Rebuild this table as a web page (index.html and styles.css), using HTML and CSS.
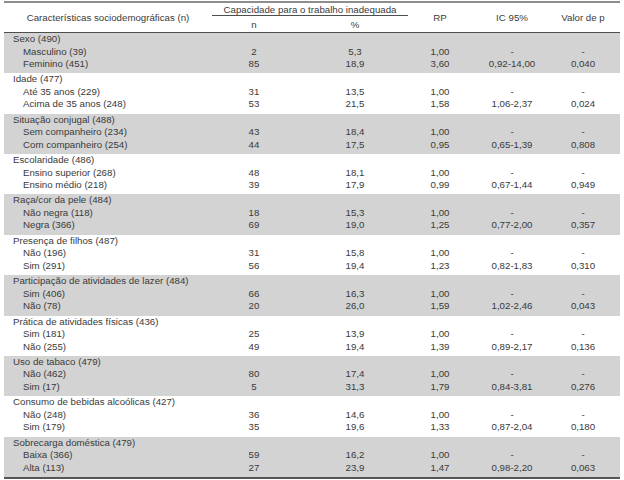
FILE: index.html
```html
<!DOCTYPE html>
<html lang="pt">
<head>
<meta charset="utf-8">
<title>Tabela</title>
<link rel="stylesheet" href="styles.css">
</head>
<body>
<div class="tbl">
  <div class="cols head">
    <div class="h-lbl">Características sociodemográficas (n)</div>
    <div class="h-cap">Capacidade para o trabalho inadequada</div>
    <div class="h-n">n</div>
    <div class="h-p">%</div>
    <div class="h-rp">RP</div>
    <div class="h-ic">IC 95%</div>
    <div class="h-v">Valor de p</div>
  </div>

  <div class="grp sh">
    <div class="cols"><div class="gl">Sexo (490)</div></div>
    <div class="cols"><div class="sl">Masculino (39)</div><div class="c">2</div><div class="c">5,3</div><div class="c">1,00</div><div class="c">-</div><div class="c">-</div></div>
    <div class="cols"><div class="sl">Feminino (451)</div><div class="c">85</div><div class="c">18,9</div><div class="c">3,60</div><div class="c">0,92-14,00</div><div class="c">0,040</div></div>
  </div>

  <div class="grp">
    <div class="cols"><div class="gl">Idade (477)</div></div>
    <div class="cols"><div class="sl">Até 35 anos (229)</div><div class="c">31</div><div class="c">13,5</div><div class="c">1,00</div><div class="c">-</div><div class="c">-</div></div>
    <div class="cols"><div class="sl">Acima de 35 anos (248)</div><div class="c">53</div><div class="c">21,5</div><div class="c">1,58</div><div class="c">1,06-2,37</div><div class="c">0,024</div></div>
  </div>

  <div class="grp sh">
    <div class="cols"><div class="gl">Situação conjugal (488)</div></div>
    <div class="cols"><div class="sl">Sem companheiro (234)</div><div class="c">43</div><div class="c">18,4</div><div class="c">1,00</div><div class="c">-</div><div class="c">-</div></div>
    <div class="cols"><div class="sl">Com companheiro (254)</div><div class="c">44</div><div class="c">17,5</div><div class="c">0,95</div><div class="c">0,65-1,39</div><div class="c">0,808</div></div>
  </div>

  <div class="grp">
    <div class="cols"><div class="gl">Escolaridade (486)</div></div>
    <div class="cols"><div class="sl">Ensino superior (268)</div><div class="c">48</div><div class="c">18,1</div><div class="c">1,00</div><div class="c">-</div><div class="c">-</div></div>
    <div class="cols"><div class="sl">Ensino médio (218)</div><div class="c">39</div><div class="c">17,9</div><div class="c">0,99</div><div class="c">0,67-1,44</div><div class="c">0,949</div></div>
  </div>

  <div class="grp sh">
    <div class="cols"><div class="gl">Raça/cor da pele (484)</div></div>
    <div class="cols"><div class="sl">Não negra (118)</div><div class="c">18</div><div class="c">15,3</div><div class="c">1,00</div><div class="c">-</div><div class="c">-</div></div>
    <div class="cols"><div class="sl">Negra (366)</div><div class="c">69</div><div class="c">19,0</div><div class="c">1,25</div><div class="c">0,77-2,00</div><div class="c">0,357</div></div>
  </div>

  <div class="grp">
    <div class="cols"><div class="gl">Presença de filhos (487)</div></div>
    <div class="cols"><div class="sl">Não (196)</div><div class="c">31</div><div class="c">15,8</div><div class="c">1,00</div><div class="c">-</div><div class="c">-</div></div>
    <div class="cols"><div class="sl">Sim (291)</div><div class="c">56</div><div class="c">19,4</div><div class="c">1,23</div><div class="c">0,82-1,83</div><div class="c">0,310</div></div>
  </div>

  <div class="grp sh">
    <div class="cols"><div class="gl">Participação de atividades de lazer (484)</div></div>
    <div class="cols"><div class="sl">Sim (406)</div><div class="c">66</div><div class="c">16,3</div><div class="c">1,00</div><div class="c">-</div><div class="c">-</div></div>
    <div class="cols"><div class="sl">Não (78)</div><div class="c">20</div><div class="c">26,0</div><div class="c">1,59</div><div class="c">1,02-2,46</div><div class="c">0,043</div></div>
  </div>

  <div class="grp">
    <div class="cols"><div class="gl">Prática de atividades físicas (436)</div></div>
    <div class="cols"><div class="sl">Sim (181)</div><div class="c">25</div><div class="c">13,9</div><div class="c">1,00</div><div class="c">-</div><div class="c">-</div></div>
    <div class="cols"><div class="sl">Não (255)</div><div class="c">49</div><div class="c">19,4</div><div class="c">1,39</div><div class="c">0,89-2,17</div><div class="c">0,136</div></div>
  </div>

  <div class="grp sh">
    <div class="cols"><div class="gl">Uso de tabaco (479)</div></div>
    <div class="cols"><div class="sl">Não (462)</div><div class="c">80</div><div class="c">17,4</div><div class="c">1,00</div><div class="c">-</div><div class="c">-</div></div>
    <div class="cols"><div class="sl">Sim (17)</div><div class="c">5</div><div class="c">31,3</div><div class="c">1,79</div><div class="c">0,84-3,81</div><div class="c">0,276</div></div>
  </div>

  <div class="grp">
    <div class="cols"><div class="gl">Consumo de bebidas alcoólicas (427)</div></div>
    <div class="cols"><div class="sl">Não (248)</div><div class="c">36</div><div class="c">14,6</div><div class="c">1,00</div><div class="c">-</div><div class="c">-</div></div>
    <div class="cols"><div class="sl">Sim (179)</div><div class="c">35</div><div class="c">19,6</div><div class="c">1,33</div><div class="c">0,87-2,04</div><div class="c">0,180</div></div>
  </div>

  <div class="grp sh">
    <div class="cols"><div class="gl">Sobrecarga doméstica (479)</div></div>
    <div class="cols"><div class="sl">Baixa (366)</div><div class="c">59</div><div class="c">16,2</div><div class="c">1,00</div><div class="c">-</div><div class="c">-</div></div>
    <div class="cols"><div class="sl">Alta (113)</div><div class="c">27</div><div class="c">23,9</div><div class="c">1,47</div><div class="c">0,98-2,20</div><div class="c">0,063</div></div>
  </div>
</div>
</body>
</html>
```

FILE: styles.css
```css
body {
  margin: 0;
  background: #ffffff;
  font-family: "Liberation Sans", Arial, sans-serif;
  font-size: 9.7px;
  color: #3a3a3a;
}

.tbl {
  margin: 1px 4px 0;
  width: 616px;
  border-top: 2px solid #8e8e8e;
  border-bottom: 2px solid #555555;
}

.cols {
  display: grid;
  grid-template-columns: 208px 84px 118px 52px 92px 50px 12px;
}

.head {
  grid-template-rows: 13px 16px;
  border-bottom: 1px solid #4e4e4e;
}

.head > div {
  display: flex;
  align-items: center;
  justify-content: center;
  white-space: nowrap;
}

.h-lbl { grid-column: 1; grid-row: 1 / 3; }
.h-cap {
  grid-column: 2 / 4;
  grid-row: 1;
  margin-right: 6px;
  border-bottom: 1px solid #4e4e4e;
}
.h-n { grid-column: 2; grid-row: 2; }
.h-p { grid-column: 3; grid-row: 2; }
.h-rp { grid-column: 4; grid-row: 1 / 3; }
.h-ic { grid-column: 5; grid-row: 1 / 3; }
.h-v { grid-column: 6; grid-row: 1 / 3; }

.grp {
  padding-bottom: 2.86px;
}

.grp.sh {
  background: #d3d3d3;
}

.grp .cols {
  height: 12.5px;
  line-height: 12.5px;
}

.gl {
  grid-column: 1 / 7;
  padding-left: 9px;
  white-space: nowrap;
}

.sl {
  padding-left: 19px;
  white-space: nowrap;
}

.c {
  display: flex;
  justify-content: center;
  white-space: nowrap;
}
```
